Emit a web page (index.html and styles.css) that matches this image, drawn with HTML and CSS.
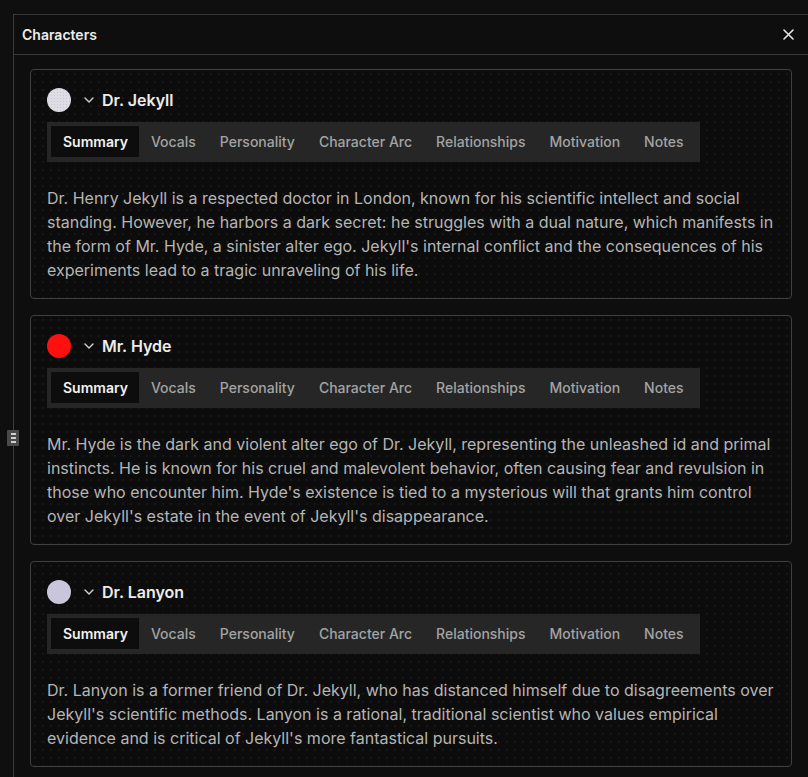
FILE: index.html
```html
<!DOCTYPE html>
<html>
<head>
<meta charset="utf-8">
<link rel="stylesheet" href="styles.css">
</head>
<body>
<div class="app">
  <div class="gutter">
    <div class="handle"><span></span><span></span><span></span></div>
  </div>
  <section class="panel">
    <header class="panel-head">
      <h1 class="panel-title">Characters</h1>
      <button class="close" aria-label="Close">
        <svg width="11" height="11" viewBox="0 0 11 11"><path d="M1 1L10 10M10 1L1 10" stroke="#e6e6e6" stroke-width="1.6" stroke-linecap="round"/></svg>
      </button>
    </header>
    <div class="panel-body">
      <article class="card">
        <div class="card-head">
          <span class="avatar avatar-jekyll"></span>
          <svg class="chev" width="10" height="6" viewBox="0 0 10 6"><path d="M1 1l4 4 4-4" fill="none" stroke="#d0d0d0" stroke-width="1.4" stroke-linecap="round" stroke-linejoin="round"/></svg>
          <h2 class="name">Dr. Jekyll</h2>
        </div>
        <nav class="tabs">
          <span class="tab active">Summary</span><span class="tab">Vocals</span><span class="tab">Personality</span><span class="tab">Character Arc</span><span class="tab">Relationships</span><span class="tab">Motivation</span><span class="tab">Notes</span>
        </nav>
        <p class="desc">Dr. Henry Jekyll is a respected doctor in London, known for his scientific intellect and social standing. However, he harbors a dark secret: he struggles with a dual nature, which manifests in the form of Mr. Hyde, a sinister alter ego. Jekyll's internal conflict and the consequences of his experiments lead to a tragic unraveling of his life.</p>
      </article>
      <article class="card">
        <div class="card-head">
          <span class="avatar avatar-hyde"></span>
          <svg class="chev" width="10" height="6" viewBox="0 0 10 6"><path d="M1 1l4 4 4-4" fill="none" stroke="#d0d0d0" stroke-width="1.4" stroke-linecap="round" stroke-linejoin="round"/></svg>
          <h2 class="name">Mr. Hyde</h2>
        </div>
        <nav class="tabs">
          <span class="tab active">Summary</span><span class="tab">Vocals</span><span class="tab">Personality</span><span class="tab">Character Arc</span><span class="tab">Relationships</span><span class="tab">Motivation</span><span class="tab">Notes</span>
        </nav>
        <p class="desc">Mr. Hyde is the dark and violent alter ego of Dr. Jekyll, representing the unleashed id and primal instincts. He is known for his cruel and malevolent behavior, often causing fear and revulsion in those who encounter him. Hyde's existence is tied to a mysterious will that grants him control over Jekyll's estate in the event of Jekyll's disappearance.</p>
      </article>
      <article class="card">
        <div class="card-head">
          <span class="avatar avatar-lanyon"></span>
          <svg class="chev" width="10" height="6" viewBox="0 0 10 6"><path d="M1 1l4 4 4-4" fill="none" stroke="#d0d0d0" stroke-width="1.4" stroke-linecap="round" stroke-linejoin="round"/></svg>
          <h2 class="name">Dr. Lanyon</h2>
        </div>
        <nav class="tabs">
          <span class="tab active">Summary</span><span class="tab">Vocals</span><span class="tab">Personality</span><span class="tab">Character Arc</span><span class="tab">Relationships</span><span class="tab">Motivation</span><span class="tab">Notes</span>
        </nav>
        <p class="desc">Dr. Lanyon is a former friend of Dr. Jekyll, who has distanced himself due to disagreements over Jekyll's scientific methods. Lanyon is a rational, traditional scientist who values empirical evidence and is critical of Jekyll's more fantastical pursuits.</p>
      </article>
    </div>
  </section>
</div>
</body>
</html>
```
FILE: styles.css
```css
* { box-sizing: border-box; }
html, body {
  margin: 0;
  padding: 0;
  background: #0f0f0f;
  height: 100%;
  overflow: hidden;
}
body {
  font-family: Inter, "Noto Sans", sans-serif;
  color: #e6e6e6;
}
.app {
  display: flex;
  padding-top: 14px;
  height: 100%;
}
.gutter {
  width: 13px;
  flex: none;
  position: relative;
  display: flex;
  align-items: flex-start;
}
.handle {
  position: absolute;
  left: 7px;
  top: 416px;
  width: 12px;
  height: 16px;
  background: #4a4a4a;
  border-radius: 1px;
  display: flex;
  flex-direction: column;
  align-items: center;
  justify-content: center;
  gap: 2px;
  z-index: 2;
}
.handle span {
  width: 5px;
  height: 2px;
  background: #cfcfcf;
}
.panel {
  flex: 1;
  border-left: 1px solid #3a3a3a;
  border-top: 1px solid #3a3a3a;
  background: #0e0e0e;
  margin-right: -20px;
  display: flex;
  flex-direction: column;
}
.panel-head {
  height: 40px;
  border-bottom: 1px solid #3a3a3a;
  display: flex;
  align-items: center;
  justify-content: space-between;
  padding: 0 34px 0 8px;
}
.panel-title {
  margin: 0;
  font-size: 14px;
  font-weight: 600;
  color: #ececec;
}
.close {
  background: none;
  border: 0;
  padding: 0;
  display: flex;
  cursor: pointer;
}
.panel-body {
  padding: 14px 36px 0 16px;
  display: flex;
  flex-direction: column;
  gap: 16px;
}
.card {
  border: 1px solid #404040;
  border-radius: 4px;
  padding: 16px 16px 16px;
  background-color: #0c0c0c;
  background-image: radial-gradient(circle, #1f1f1f 0.6px, transparent 0.9px);
  background-size: 8px 8px;
}
.card-head {
  display: flex;
  align-items: center;
  height: 28px;
}
.avatar {
  width: 24px;
  height: 24px;
  border-radius: 50%;
  flex: none;
}
.avatar-jekyll {
  background-color: #dedde6;
  background-image: radial-gradient(circle, #c9c8d2 0.6px, transparent 0.9px);
  background-size: 3px 3px;
}
.avatar-hyde { background: #ff1010; }
.avatar-lanyon { background: #c9c6dc; }
.chev {
  margin-left: 13px;
  margin-right: 8px;
}
.name {
  margin: 0;
  font-size: 16px;
  font-weight: 600;
  color: #ececec;
}
.tabs {
  margin-top: 8px;
  display: inline-flex;
  background: #262626;
  padding: 4px;
  height: 40px;
}
.tab {
  padding: 0 12px;
  font-size: 14px;
  font-weight: 500;
  color: #a3a3a3;
  display: flex;
  align-items: center;
  height: 31px;
  white-space: nowrap;
}
.tab.active {
  background: #0d0d0d;
  color: #f2f2f2;
  font-weight: 600;
  padding: 0 11px 0 12px;
}
.desc {
  margin: 24px 0 0;
  font-size: 16px;
  line-height: 24px;
  color: #b5b5b5;
}
```
